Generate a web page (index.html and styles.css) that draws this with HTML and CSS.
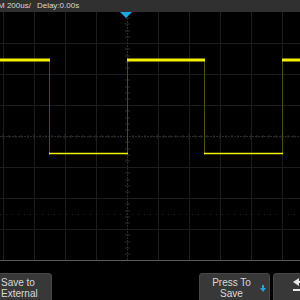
FILE: index.html
```html
<!DOCTYPE html>
<html lang="en">
<head>
    <meta charset="UTF-8">
    <title>Scope</title>
    <link rel="stylesheet" href="styles.css">
</head>
<body>
    <div class="topbar">
        <span class="timebase">M 200us/</span>
        <span class="delay">Delay:0.00s</span>
    </div>
    <div class="screen">
        <svg class="grid" width="300" height="249" viewBox="0 0 300 249">
            <!-- grid lines -->
            <g stroke="#1c1c1c" stroke-width="1">
                <line x1="3.5" y1="0" x2="3.5" y2="248"/>
                <line x1="34.5" y1="0" x2="34.5" y2="248"/>
                <line x1="65.5" y1="0" x2="65.5" y2="248"/>
                <line x1="96.5" y1="0" x2="96.5" y2="248"/>
                <line x1="158.5" y1="0" x2="158.5" y2="248"/>
                <line x1="189.5" y1="0" x2="189.5" y2="248"/>
                <line x1="220.5" y1="0" x2="220.5" y2="248"/>
                <line x1="251.5" y1="0" x2="251.5" y2="248"/>
                <line x1="282.5" y1="0" x2="282.5" y2="248"/>
                <line x1="0" y1="31.5" x2="300" y2="31.5"/>
                <line x1="0" y1="62.5" x2="300" y2="62.5"/>
                <line x1="0" y1="93.5" x2="300" y2="93.5"/>
                <line x1="0" y1="155.5" x2="300" y2="155.5"/>
                <line x1="0" y1="186.5" x2="300" y2="186.5"/>
                <line x1="0" y1="217.5" x2="300" y2="217.5"/>
            </g>
            <!-- center axes, dotted with ticks -->
            <g stroke="#2a2a2a" stroke-width="1">
                <line x1="127.5" y1="0" x2="127.5" y2="248" stroke-dasharray="2 1"/>
                <line x1="0" y1="124.5" x2="300" y2="124.5" stroke-dasharray="2 1"/>
                <line x1="0" y1="202.5" x2="300" y2="202.5" stroke="#222" stroke-dasharray="1 5"/>
            </g>
            <g stroke="#282828" stroke-width="1">
                <path d="M3 122v5M9 123v3M15 123v3M21 123v3M28 123v3M34 122v5M40 123v3M46 123v3M52 123v3M59 123v3M65 122v5M71 123v3M77 123v3M83 123v3M90 123v3M96 122v5M102 123v3M108 123v3M114 123v3M121 123v3M133 123v3M139 123v3M145 123v3M152 123v3M158 122v5M164 123v3M170 123v3M176 123v3M183 123v3M189 122v5M195 123v3M201 123v3M207 123v3M214 123v3M220 122v5M226 123v3M232 123v3M238 123v3M245 123v3M251 122v5M257 123v3M263 123v3M269 123v3M276 123v3M282 122v5M288 123v3M294 123v3"/>
                <path d="M125 6h5M125 12h5M125 19h5M125 25h5M125 37h5M125 44h5M125 50h5M125 56h5M125 68h5M125 75h5M125 81h5M125 87h5M125 99h5M125 106h5M125 112h5M125 118h5M125 130h5M125 137h5M125 143h5M125 149h5M125 161h5M125 168h5M125 174h5M125 180h5M125 192h5M125 199h5M125 205h5M125 211h5M125 223h5M125 230h5M125 236h5M125 242h5"/>
            </g>
            <!-- bottom border -->
            <line x1="0" y1="248.5" x2="300" y2="248.5" stroke="#5a5a5a" stroke-width="1"/>
            <!-- waveform edges -->
            <g stroke="#4e4e0a" stroke-width="1">
                <line x1="49.5" y1="48" x2="49.5" y2="143"/>
                <line x1="127.5" y1="48" x2="127.5" y2="141"/>
                <line x1="204.5" y1="48" x2="204.5" y2="143"/>
                <line x1="282.5" y1="48" x2="282.5" y2="141"/>
            </g>
            <!-- waveform levels -->
            <g stroke="#f2f200">
                <line x1="0" y1="48" x2="50" y2="48" stroke-width="3"/>
                <line x1="127" y1="48" x2="205" y2="48" stroke-width="3"/>
                <line x1="282" y1="48" x2="300" y2="48" stroke-width="3"/>
                <line x1="49" y1="141.5" x2="128" y2="141.5" stroke-width="1.6"/>
                <line x1="204" y1="141.5" x2="283" y2="141.5" stroke-width="1.6"/>
            </g>
            <!-- trigger position marker -->
            <polygon points="120,0 132,0 126,6" fill="#1ba6e4"/>
        </svg>
    </div>
    <div class="softkeys">
        <div class="key key-external">Save to<br>External</div>
        <div class="key key-save">Press To<br>Save<span class="knob-arrow"></span></div>
        <div class="key key-back"><span class="back-arrow"></span><span class="back-bar"></span></div>
    </div>
</body>
</html>
```

FILE: styles.css
```css
body {
    margin: 0;
    width: 300px;
    height: 300px;
    overflow: hidden;
    background: #000;
    font-family: "Liberation Sans", Arial, sans-serif;
    color: #d8d8d8;
}

.topbar {
    height: 12px;
    background: #303030;
    display: flex;
    align-items: center;
    font-size: 8px;
    line-height: 12px;
    white-space: nowrap;
    margin-left: -2px;
}

.delay {
    margin-left: 6px;
}

.screen {
    height: 249px;
}

.grid {
    display: block;
}

.softkeys {
    display: flex;
    margin-top: 12px;
    height: 30px;
}

.key {
    position: relative;
    flex-shrink: 0;
    background: #383838;
    border: 1px solid #474747;
    border-radius: 3px;
    font-size: 10px;
    line-height: 11px;
    padding-top: 3px;
    box-sizing: border-box;
    height: 30px;
}

.key-external {
    width: 61px;
    margin-left: -9px;
    padding-left: 9px;
}

.key-save {
    width: 71px;
    margin-left: 147px;
    text-align: center;
    padding-right: 6px;
}

.knob-arrow {
    position: absolute;
    right: 3px;
    top: 14px;
    width: 0;
    height: 0;
    border-left: 3px solid transparent;
    border-right: 3px solid transparent;
    border-top: 4px solid #1ba6e4;
}

.knob-arrow::before {
    content: "";
    position: absolute;
    left: -1px;
    top: -7px;
    width: 2px;
    height: 3px;
    background: #1ba6e4;
}

.key-back {
    width: 40px;
    margin-left: 3px;
}

.back-arrow {
    position: absolute;
    left: 19px;
    top: 4px;
    width: 0;
    height: 0;
    border-top: 4px solid transparent;
    border-bottom: 4px solid transparent;
    border-right: 6px solid #e8e8e8;
}

.back-arrow::after {
    content: "";
    position: absolute;
    left: 6px;
    top: -1px;
    width: 6px;
    height: 2px;
    background: #e8e8e8;
}

.back-bar {
    position: absolute;
    left: 19px;
    top: 15px;
    width: 12px;
    height: 2px;
    background: #e8e8e8;
}
```
